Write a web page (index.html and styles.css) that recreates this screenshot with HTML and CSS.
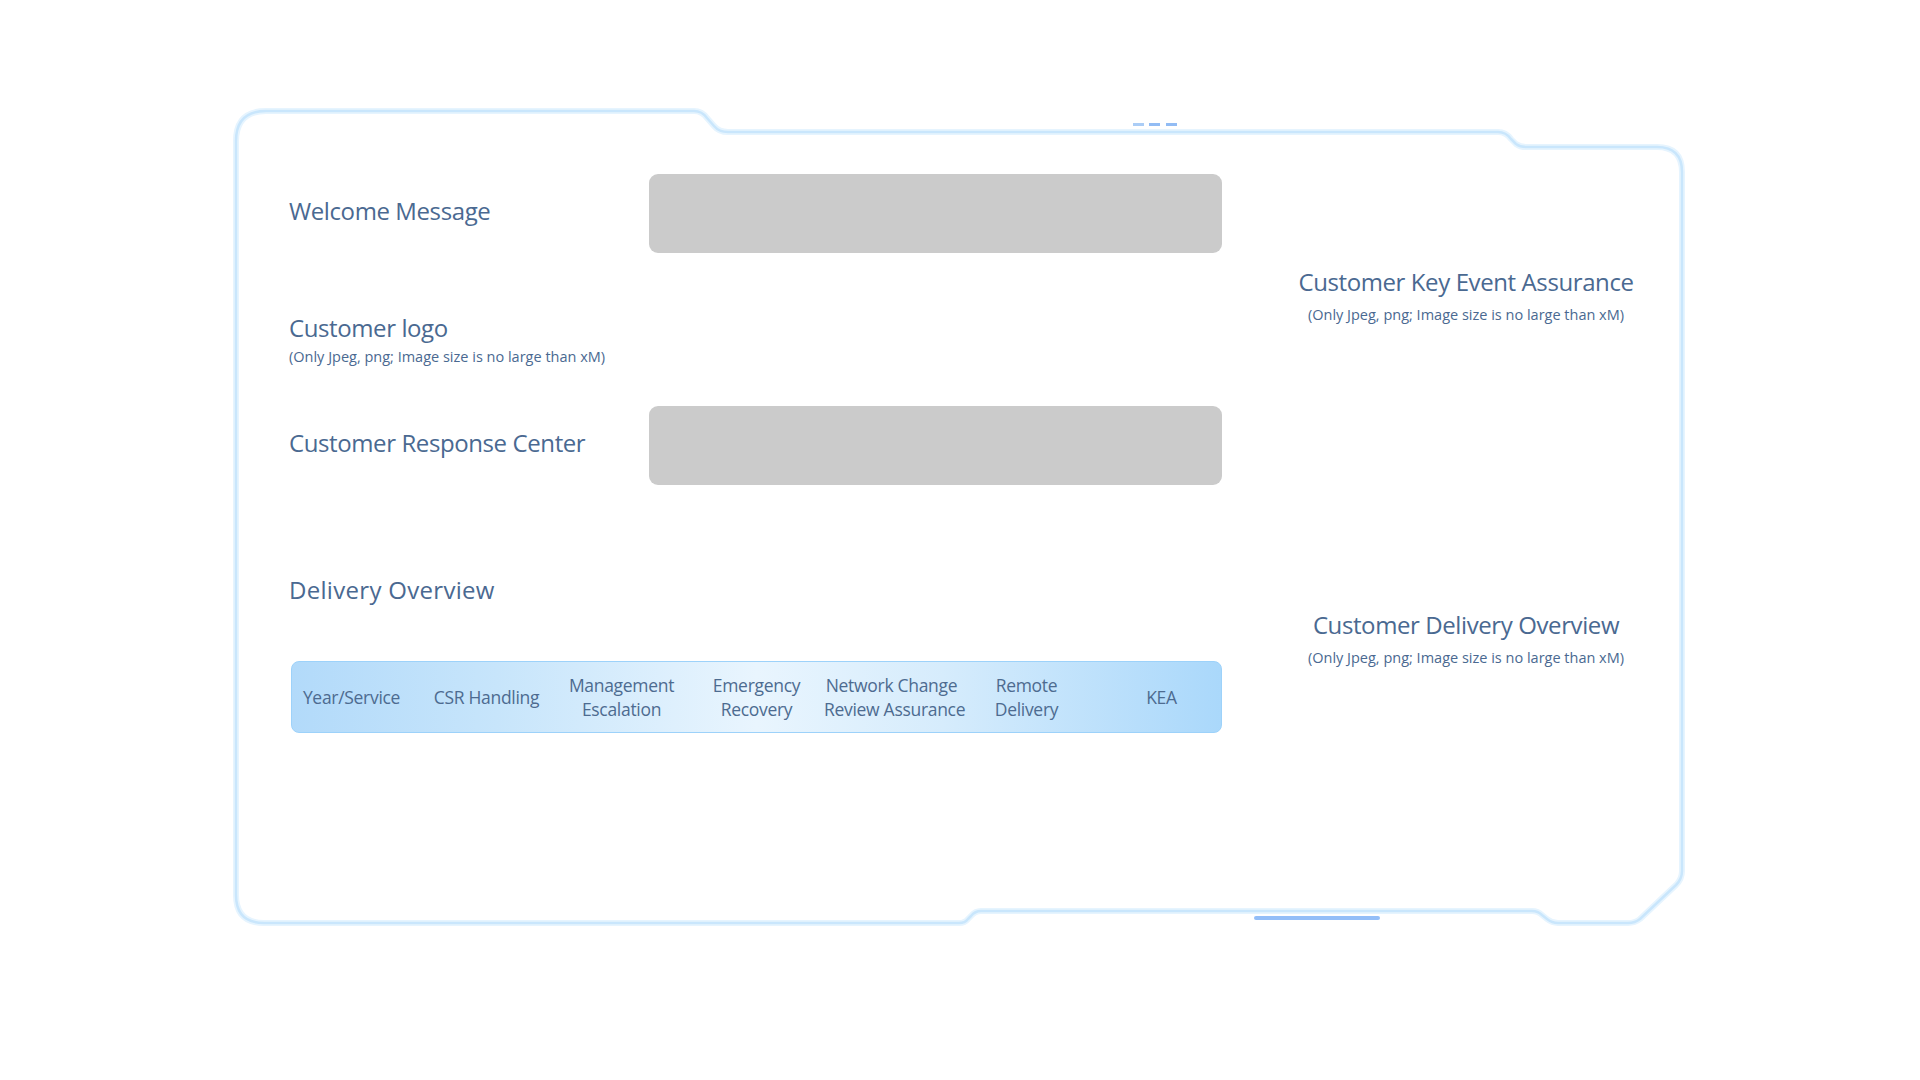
FILE: index.html
```html
<!DOCTYPE html>
<html lang="en">
<head>
<meta charset="utf-8">
<title>Customer Settings</title>
<link rel="stylesheet" href="styles.css">
</head>
<body>
<div class="page">
  <section class="panel">
    <svg class="frame" width="1446" height="812" viewBox="0 0 1446 812" aria-hidden="true">
      <path class="glow" d="M0 30 Q0 0 30 0 L458 0 Q466 0 471 7 L478 15 Q483 21 492 21 L1262 21 Q1270 21 1275 28 L1280 33 Q1284 36 1290 36 L1421 36 Q1446 36 1446 61 L1446 760 Q1446 768 1440 774 L1404 808 Q1399 812 1392 812 L1322 812 Q1316 812 1311 808 L1306 804 Q1302 800 1296 800 L745 800 Q739 800 735 805 L732 808 Q729 812 723 812 L28 812 Q0 812 0 784 Z"/>
      <path class="line" d="M0 30 Q0 0 30 0 L458 0 Q466 0 471 7 L478 15 Q483 21 492 21 L1262 21 Q1270 21 1275 28 L1280 33 Q1284 36 1290 36 L1421 36 Q1446 36 1446 61 L1446 760 Q1446 768 1440 774 L1404 808 Q1399 812 1392 812 L1322 812 Q1316 812 1311 808 L1306 804 Q1302 800 1296 800 L745 800 Q739 800 735 805 L732 808 Q729 812 723 812 L28 812 Q0 812 0 784 Z"/>
      <rect x="897" y="12" width="11" height="3" fill="#abcdf6"/>
      <rect x="913" y="12" width="11" height="3" fill="#92bcf4"/>
      <rect x="930" y="12" width="11" height="3" fill="#92bcf4"/>
      <rect x="1018" y="805" width="126" height="4" rx="2" fill="#93bef8"/>
    </svg>

    <div class="left">
      <div class="field-row">
        <div class="label">Welcome Message</div>
        <div class="input-box"></div>
      </div>
      <div class="logo-block">
        <div class="label">Customer logo</div>
        <div class="hint">(Only Jpeg, png; Image size is no large than xM)</div>
      </div>
      <div class="field-row response">
        <div class="label">Customer Response Center</div>
        <div class="input-box"></div>
      </div>
      <div class="label delivery-title">Delivery Overview</div>
      <div class="table-head">
        <div class="th">Year/Service</div>
        <div class="th">CSR Handling</div>
        <div class="th">Management<br>Escalation</div>
        <div class="th">Emergency<br>Recovery</div>
        <div class="th">Network Change<br>Review Assurance</div>
        <div class="th">Remote<br>Delivery</div>
        <div class="th">KEA</div>
      </div>
    </div>

    <div class="right">
      <div class="upload kea">
        <div class="label">Customer Key Event Assurance</div>
        <div class="hint">(Only Jpeg, png; Image size is no large than xM)</div>
      </div>
      <div class="upload cdo">
        <div class="label">Customer Delivery Overview</div>
        <div class="hint">(Only Jpeg, png; Image size is no large than xM)</div>
      </div>
    </div>
  </section>
</div>
</body>
</html>
```

FILE: styles.css
```css
html, body {
  margin: 0;
  padding: 0;
  background: #ffffff;
}

body {
  font-family: "Open Sans", "Noto Sans", sans-serif;
  color: #4a6991;
}

.page {
  width: 1920px;
  height: 1080px;
  padding: 111px 0 0 236px;
  box-sizing: border-box;
}

.panel {
  position: relative;
  width: 1446px;
  height: 812px;
  display: flex;
}

.frame {
  position: absolute;
  left: 0;
  top: 0;
  overflow: visible;
  pointer-events: none;
}

.frame .glow {
  fill: none;
  stroke: #e6f4fe;
  stroke-width: 6;
  stroke-linejoin: round;
}

.frame .line {
  fill: none;
  stroke: #c9e6fc;
  stroke-width: 2.5;
  stroke-linejoin: round;
}

.left {
  position: relative;
  width: 986px;
  padding: 63px 0 0 53px;
  box-sizing: border-box;
  display: flex;
  flex-direction: column;
}

.label {
  font-size: 24px;
  line-height: 32px;
  letter-spacing: -0.4px;
  white-space: nowrap;
}

.hint {
  font-size: 14.5px;
  line-height: 20px;
  white-space: nowrap;
}

.field-row {
  display: flex;
  align-items: center;
  height: 79px;
}

.field-row .label {
  width: 360px;
  flex: none;
  padding-bottom: 5px;
}

.input-box {
  width: 573px;
  height: 79px;
  background: #cbcbcb;
  border-radius: 9px;
}

.logo-block {
  margin-top: 59px;
  display: flex;
  flex-direction: column;
  gap: 3px;
}

.response {
  margin-top: 39px;
}

.delivery-title {
  margin-top: 89px;
  letter-spacing: 0.3px;
}

.table-head {
  margin-top: 55px;
  width: 931px;
  height: 72px;
  margin-left: 2px;
  box-sizing: border-box;
  border: 1.5px solid #9dd2fa;
  border-radius: 8px;
  background: linear-gradient(90deg, #b2dafa 0%, #c7e5fb 22%, #e9f5fe 50%, #d6ecfc 70%, #aad8fb 100%);
  display: grid;
  grid-template-columns: repeat(7, 135px);
  justify-content: center;
  align-items: center;
}

.th {
  text-align: center;
  font-size: 17.5px;
  line-height: 24px;
  letter-spacing: -0.3px;
  white-space: nowrap;
  color: #4d6b90;
}

.right {
  position: relative;
  width: 400px;
  margin-left: 44px;
  display: flex;
  flex-direction: column;
  align-items: center;
  text-align: center;
}

.upload {
  display: flex;
  flex-direction: column;
  align-items: center;
  gap: 7px;
}

.kea {
  margin-top: 155px;
}

.cdo {
  margin-top: 284px;
}
```
